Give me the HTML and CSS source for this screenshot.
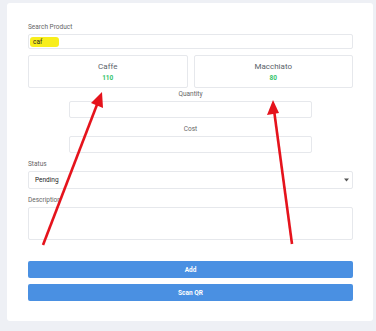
FILE: index.html
```html
<!DOCTYPE html>
<html lang="en">
<head>
  <meta charset="UTF-8">
  <title>Add Product</title>
  <link rel="stylesheet" href="styles.css">
</head>
<body>
  <div class="card">
    <label class="lbl">Search Product</label>
    <div class="field search"><span class="mark">caf</span></div>

    <div class="results">
      <div class="item">
        <div class="name">Caffe</div>
        <div class="qty">110</div>
      </div>
      <div class="item">
        <div class="name">Macchiato</div>
        <div class="qty">80</div>
      </div>
    </div>

    <label class="lbl center">Quantity</label>
    <div class="field narrow"></div>

    <label class="lbl center">Cost</label>
    <div class="field narrow"></div>

    <label class="lbl">Status</label>
    <div class="field select">
      <span>Pending</span>
      <svg class="caret" width="5" height="4" viewBox="0 0 5 4"><path d="M0 0.5 L5 0.5 L2.5 3.5 Z" fill="#555"/></svg>
    </div>

    <label class="lbl">Description</label>
    <div class="field area"></div>

    <button class="btn add">Add</button>
    <button class="btn">Scan QR</button>

    <!-- annotation arrows over the form -->
    <svg class="arrows" width="376" height="331" viewBox="0 0 376 331">
      <line x1="43" y1="245" x2="98" y2="102" stroke="#e5131c" stroke-width="2.6"/>
      <polygon points="102,92 91,103 103,108" fill="#e5131c"/>
      <line x1="292" y1="244" x2="274" y2="110" stroke="#e5131c" stroke-width="2.6"/>
      <polygon points="273,100 267,115 279,113" fill="#e5131c"/>
    </svg>
  </div>
</body>
</html>
```

FILE: styles.css
```css
body{
  margin: 0;
  background: #eef0f5;
  font-family: Roboto, "Liberation Sans", sans-serif;
  color: #333;
}
.card{
  margin: 3px 3px 0 7px;
  height: 318px;
  box-sizing: border-box;
  padding: 20px 20px 0 21px;
  background: #fff;
  border-radius: 3px;
  display: flex;
  flex-direction: column;
}
.lbl{
  display: block;
  font-size: 6.5px;
  line-height: 8px;
  color: #666;
  margin-bottom: 3px;
}
.center{
  text-align: center;
}
.field{
  box-sizing: border-box;
  border: 1px solid #e6e8ec;
  border-radius: 2px;
  background: #fff;
}
.search{
  height: 15px;
  display: flex;
  align-items: center;
  padding-left: 1px;
}
.mark{
  display: block;
  background: #f8ee1c;
  width: 29px;
  height: 10px;
  border-radius: 3px;
  font-size: 6.5px;
  line-height: 10px;
  padding-left: 3px;
  box-sizing: border-box;
  color: #222;
}
.results{
  display: flex;
  gap: 6px;
  margin: 6px 0 2px;
}
.item{
  flex: 1;
  height: 33px;
  box-sizing: border-box;
  border: 1px solid #e6e8ec;
  border-radius: 2px;
  text-align: center;
  padding-top: 6px;
}
.name{
  font-size: 8px;
  line-height: 10px;
  font-weight: 400;
  color: #5a5f6a;
}
.qty{
  font-size: 6.5px;
  font-weight: 700;
  color: #34c46b;
  margin-top: 2px;
}
.narrow{
  width: 243px;
  height: 17px;
  margin: 0 auto 7px;
}
.select{
  height: 18px;
  display: flex;
  align-items: center;
  justify-content: space-between;
  padding: 0 3px 0 6px;
  font-size: 6.5px;
  color: #222;
  margin-bottom: 7px;
}
.caret{
  display: block;
}
.area{
  height: 33px;
  margin-bottom: 21px;
}
.btn{
  height: 17px;
  border: none;
  border-radius: 2px;
  background: #4a90e2;
  color: #fff;
  font-family: inherit;
  font-size: 6.5px;
  font-weight: 700;
  margin-bottom: 6px;
  padding: 0;
}
.arrows{
  position: absolute;
  left: 0;
  top: 0;
  pointer-events: none;
}
```
